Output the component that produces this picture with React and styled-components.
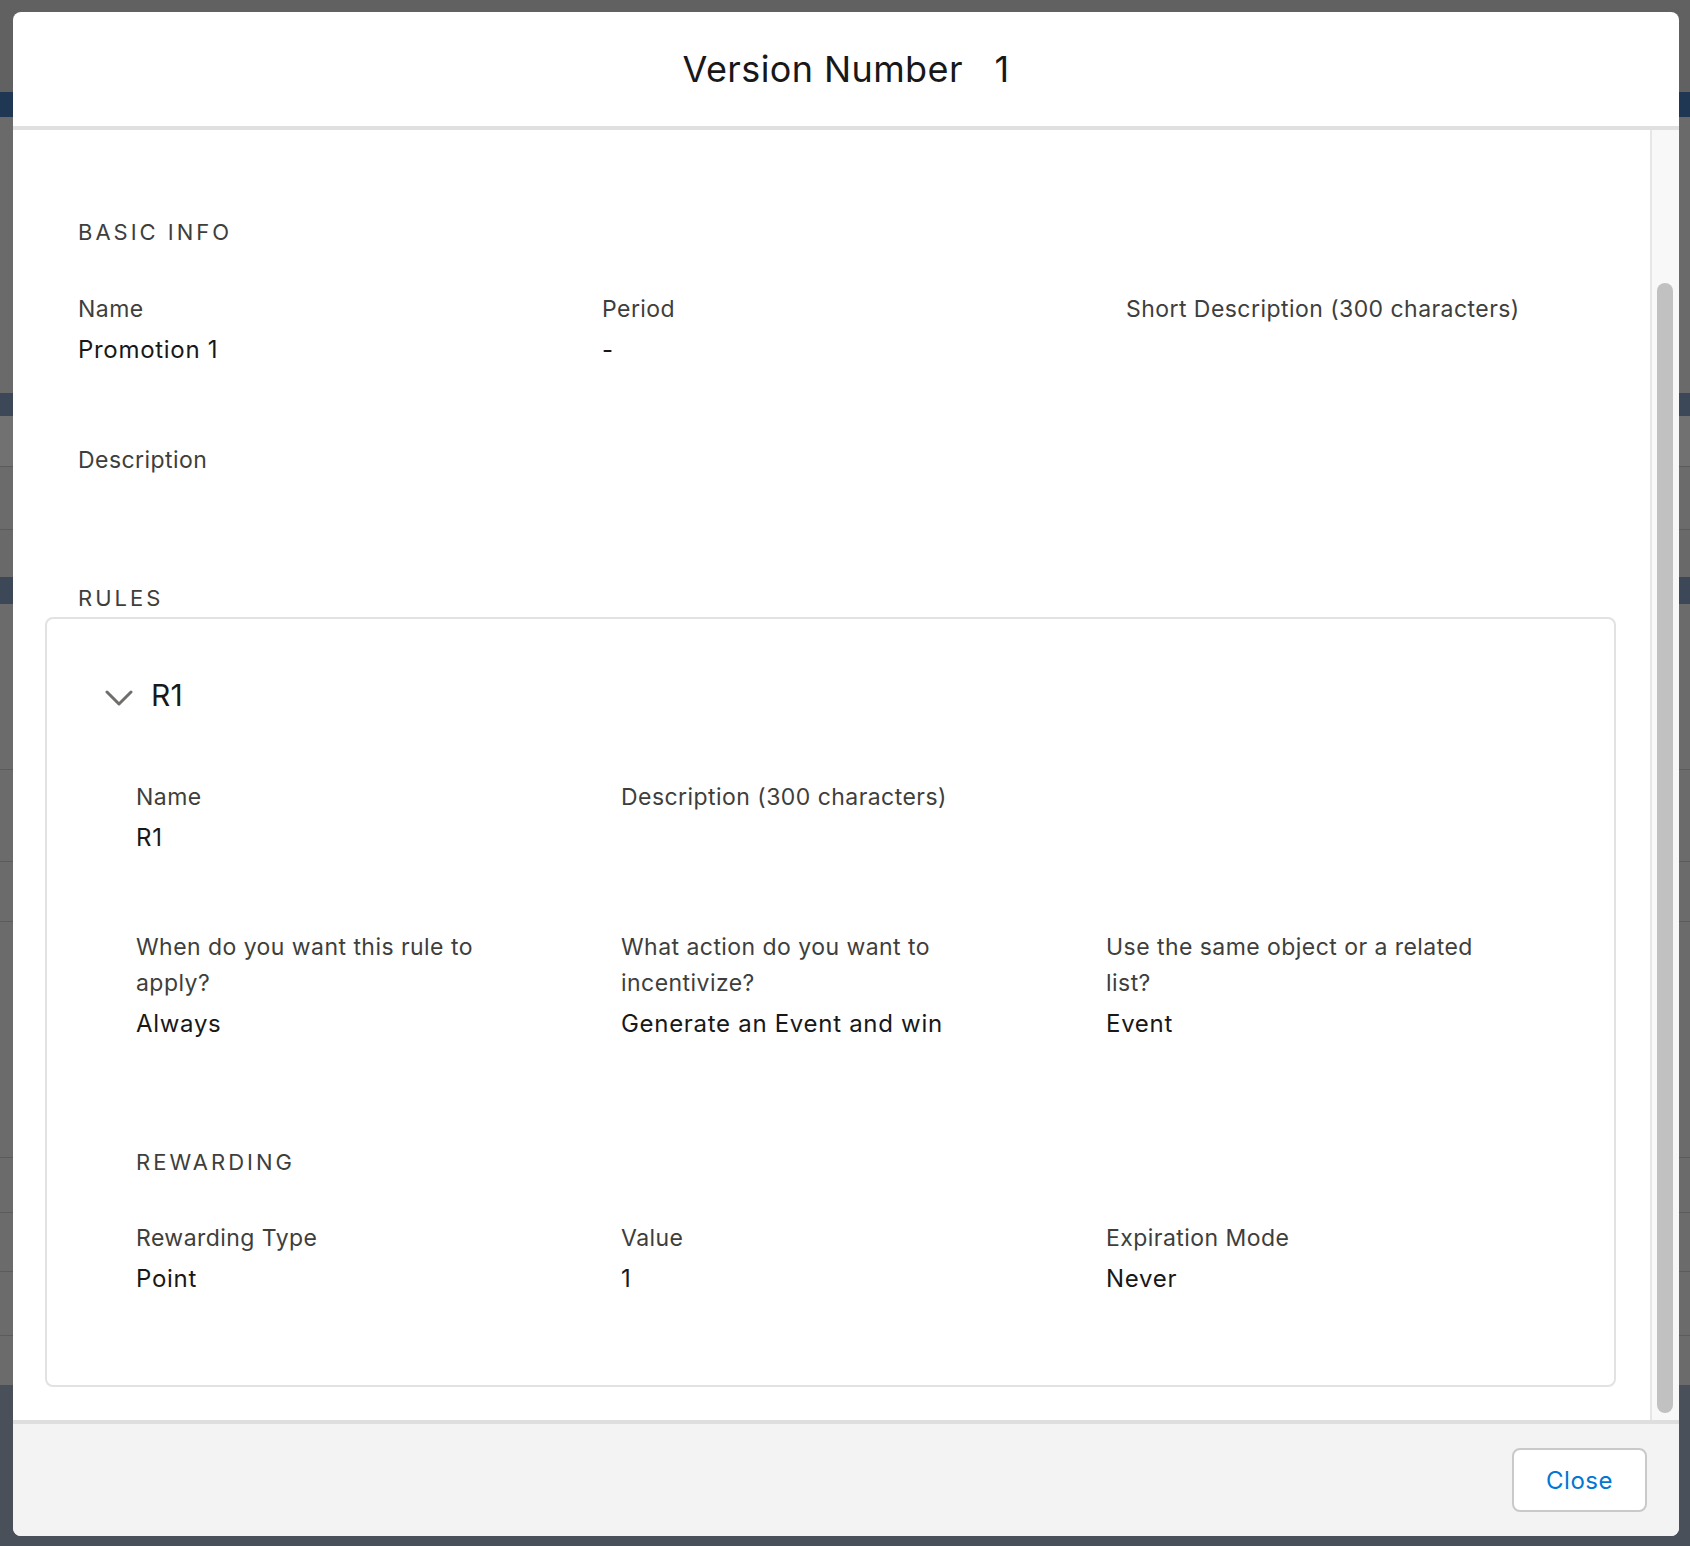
import React from 'react'
import styled, { createGlobalStyle } from 'styled-components'

const GlobalStyle = createGlobalStyle`
  html, body {
    margin: 0;
    padding: 0;
  }
  body {
    font-family: Inter, "Noto Sans", "Liberation Sans", sans-serif;
    background: #4a505a;
  }
  * {
    box-sizing: border-box;
  }
`

const Screen = styled.div`
  position: relative;
  width: 1690px;
  height: 1546px;
  overflow: hidden;
`

// the dimmed page behind the modal, only its edges show
const Backdrop = styled.div`
  display: flex;
  flex-direction: column;
  height: 100%;
`

const Strip = styled.div`
  flex: 0 0 ${p => p.$h}px;
  background: ${p => p.$c};
  border-bottom: ${p => (p.$line ? '1px solid #5b5b5b' : '0')};
`

const Modal = styled.div`
  position: absolute;
  left: 13px;
  top: 12px;
  width: 1666px;
  height: 1524px;
  background: #fff;
  border-radius: 8px;
  overflow: hidden;
  display: flex;
  flex-direction: column;
`

const Header = styled.header`
  flex: 0 0 118px;
  border-bottom: 4px solid #e0e0e0;
  padding-top: 35px;
  text-align: center;
`

const Title = styled.h1`
  margin: 0;
  font-size: 36px;
  line-height: 44px;
  font-weight: 400;
  letter-spacing: 0.4px;
  color: #181818;
`

const TitleNum = styled.span`
  margin-left: 21px;
`

const Body = styled.div`
  flex: 0 0 1290px;
  display: flex;
  min-height: 0;
`

const Content = styled.div`
  flex: 0 0 1637px;
  min-width: 0;
  padding: 84px 34px 33px 32px;
`

const Track = styled.div`
  flex: 0 0 29px;
  background: #f8f8f8;
  border-left: 2px solid #e6e6e6;
  padding: 153px 4px 0 5px;
`

const Thumb = styled.div`
  width: 16px;
  height: 1130px;
  border-radius: 8px;
  background: #c1c1c1;
`

const Section = styled.section`
  padding-left: ${p => p.$indent || 0}px;
`

const SectionTitle = styled.h2`
  margin: ${p => p.$top || 0}px 0 ${p => p.$bottom || 0}px;
  font-size: 22px;
  line-height: 36px;
  font-weight: 400;
  letter-spacing: 3px;
  text-transform: uppercase;
  color: #3e3e3c;
`

const FieldGrid = styled.div`
  display: grid;
  grid-template-columns: repeat(3, ${p => p.$col}px);
  row-gap: ${p => p.$gap}px;
`

const Field = styled.div`
  display: flex;
  flex-direction: column;
  grid-column: ${p => p.$span || 'auto'};
`

const Label = styled.div`
  font-size: 23px;
  line-height: 36px;
  letter-spacing: 0.45px;
  color: #3e3e3c;
  max-width: ${p => p.$max || 520}px;
`

const Value = styled.div`
  margin-top: 5px;
  font-size: 24px;
  line-height: 36px;
  letter-spacing: 0.7px;
  color: #181818;
`

const Card = styled.div`
  border: 2px solid #e2e2e2;
  border-radius: 8px;
  padding: 56px 23px 88px 58px;
`

const RuleHead = styled.div`
  display: flex;
  align-items: center;
  gap: 18px;
`

const Chevron = styled.svg`
  width: 28px;
  height: 16px;
  margin-top: 5px;
  flex: none;
`

const RuleName = styled.h3`
  margin: 0;
  font-size: 30px;
  line-height: 40px;
  font-weight: 400;
  letter-spacing: 0.3px;
  color: #181818;
`

const RuleBody = styled.div`
  margin-top: 64px;
  padding-left: 31px;
`

const Footer = styled.footer`
  flex: 1;
  background: #f3f3f3;
  border-top: 4px solid #dedede;
  display: flex;
  align-items: center;
  justify-content: flex-end;
  padding-right: 32px;
`

const Button = styled.button`
  width: 135px;
  height: 64px;
  border: 2px solid #c9c9c9;
  border-radius: 8px;
  background: #fff;
  color: #0176d3;
  font-family: inherit;
  font-size: 24px;
  letter-spacing: 0.5px;
  cursor: pointer;
`

const strips = [
  { h: 92, c: '#616161' },
  { h: 25, c: '#1f3753' },
  { h: 276, c: '#6a6a6a' },
  { h: 23, c: '#3c4858' },
  { h: 51, c: '#717171', line: true },
  { h: 63, c: '#6b6b6b', line: true },
  { h: 47, c: '#696969' },
  { h: 27, c: '#3c4858' },
  { h: 166, c: '#6b6b6b', line: true },
  { h: 92, c: '#6b6b6b', line: true },
  { h: 60, c: '#6b6b6b', line: true },
  { h: 236, c: '#6b6b6b', line: true },
  { h: 55, c: '#6b6b6b', line: true },
  { h: 59, c: '#6b6b6b', line: true },
  { h: 64, c: '#6b6b6b', line: true },
  { h: 49, c: '#6b6b6b' },
  { h: 161, c: '#4a505a' },
]

const basicFields = [
  { label: 'Name', value: 'Promotion 1' },
  { label: 'Period', value: '-' },
  { label: 'Short Description (300 characters)' },
  { label: 'Description' },
]

const ruleFields = [
  { label: 'Name', value: 'R1' },
  { label: 'Description (300 characters)', span: '2 / 4' },
  { label: 'When do you want this rule to apply?', value: 'Always' },
  { label: 'What action do you want to incentivize?', value: 'Generate an Event and win' },
  { label: 'Use the same object or a related list?', value: 'Event' },
]

const rewardFields = [
  { label: 'Rewarding Type', value: 'Point' },
  { label: 'Value', value: '1' },
  { label: 'Expiration Mode', value: 'Never' },
]

const renderFields = (list, max) =>
  list.map(f => (
    <Field key={f.label} $span={f.span}>
      <Label $max={max}>{f.label}</Label>
      {f.value && <Value>{f.value}</Value>}
    </Field>
  ))

const App = () => {
  return (
    <Screen>
      <GlobalStyle />
      <Backdrop>
        {strips.map((s, i) => (
          <Strip key={i} $h={s.h} $c={s.c} $line={s.line} />
        ))}
      </Backdrop>

      <Modal>
        <Header>
          <Title>
            Version Number <TitleNum>1</TitleNum>
          </Title>
        </Header>

        <Body>
          <Content>
            <Section $indent={33}>
              <SectionTitle $bottom={41}>Basic Info</SectionTitle>
              <FieldGrid $col={524} $gap={74}>
                {renderFields(basicFields)}
              </FieldGrid>
              <SectionTitle $top={102} $bottom={1}>Rules</SectionTitle>
            </Section>

            <Card>
              <RuleHead>
                <Chevron viewBox="0 0 28 16">
                  <path d="M2 2 L14 14 L26 2" fill="none" stroke="#706e6b" strokeWidth="3" strokeLinecap="round" strokeLinejoin="round" />
                </Chevron>
                <RuleName>R1</RuleName>
              </RuleHead>

              <RuleBody>
                <FieldGrid $col={485} $gap={73}>
                  {renderFields(ruleFields, 390)}
                </FieldGrid>
                <SectionTitle $top={102} $bottom={40}>Rewarding</SectionTitle>
                <FieldGrid $col={485} $gap={73}>
                  {renderFields(rewardFields, 390)}
                </FieldGrid>
              </RuleBody>
            </Card>
          </Content>
          <Track>
            <Thumb />
          </Track>
        </Body>

        <Footer>
          <Button>Close</Button>
        </Footer>
      </Modal>
    </Screen>
  )
}

export default App
